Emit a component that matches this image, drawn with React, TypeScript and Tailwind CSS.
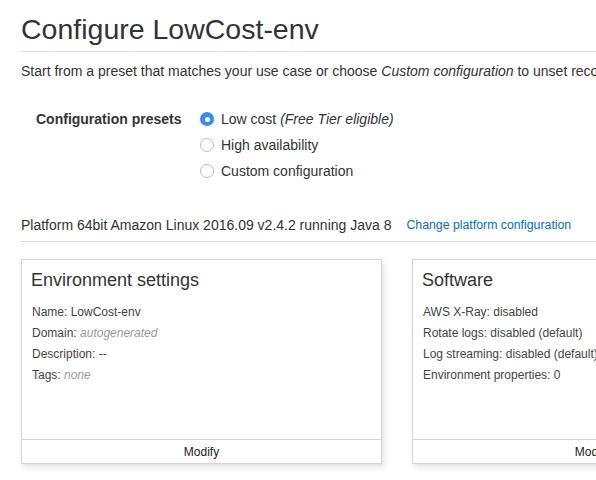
import React from 'react'

const font = { fontFamily: '"Liberation Sans", Arial, sans-serif' }

function Radio({ checked, children }: { checked?: boolean; children: React.ReactNode }) {
  return (
    <label className="flex h-[26px] items-center gap-[7px]">
      {checked ? (
        <span className="flex h-[14px] w-[14px] items-center justify-center rounded-full bg-[#3b8cf0]">
          <span className="h-[5px] w-[5px] rounded-full bg-white" />
        </span>
      ) : (
        <span className="h-[14px] w-[14px] rounded-full border border-[#bdbdbd] bg-white" />
      )}
      <span className="text-[14px] text-[#333]">{children}</span>
    </label>
  )
}

function Card({ title, children }: { title: string; children: React.ReactNode }) {
  return (
    <div className="flex h-[205px] w-[361px] shrink-0 flex-col border border-[#d5d5d5] bg-white shadow-[2px_3px_6px_rgba(0,0,0,0.12)]">
      <div className="flex-1 px-[9px] pt-[9px]">
        <h3 className="text-[18px] leading-[22px] text-[#333]">{title}</h3>
        <ul className="mt-[13px] space-y-[5px] pl-px text-[12px] leading-4 text-[#444]">{children}</ul>
      </div>
      <div className="flex h-[24px] items-center justify-center border-t border-[#d5d5d5] text-[12px] text-[#222]">
        Modify
      </div>
    </div>
  )
}

export default function App() {
  return (
    <div className="h-[480px] w-[596px] overflow-hidden bg-white" style={font}>
      <div className="pl-[21px]">
        <h1 className="pt-[12px] text-[28.5px] leading-[34px] text-[#333]">Configure LowCost-env</h1>
        <div className="mt-[5px] border-t border-[#dcdcdc]" />
        <p className="mt-[10px] whitespace-nowrap text-[14px] leading-[18px] text-[#333]">
          Start from a preset that matches your use case or choose <i>Custom configuration</i> to unset recommended values
        </p>

        <div className="mt-[26px] flex pl-[15px]">
          <div className="w-[164px] pt-[3px] text-[14px] font-bold text-[#333]">Configuration presets</div>
          <div className="flex flex-col">
            <Radio checked>
              Low cost <i>(Free Tier eligible)</i>
            </Radio>
            <Radio>High availability</Radio>
            <Radio>Custom configuration</Radio>
          </div>
        </div>

        <div className="mt-[31px] flex items-center whitespace-nowrap">
          <span className="text-[14px] text-[#333]">Platform 64bit Amazon Linux 2016.09 v2.4.2 running Java 8</span>
          <a href="#" className="ml-[15px] text-[12.3px] text-[#0a6ebd]">
            Change platform configuration
          </a>
        </div>
        <div className="mt-[5px] border-t border-[#dcdcdc]" />

        <div className="mt-[17px] flex gap-[30px]">
          <Card title="Environment settings">
            <li>Name: LowCost-env</li>
            <li>
              Domain: <i className="text-[#999]">autogenerated</i>
            </li>
            <li>Description: --</li>
            <li>
              Tags: <i className="text-[#999]">none</i>
            </li>
          </Card>
          <Card title="Software">
            <li>AWS X-Ray: disabled</li>
            <li>Rotate logs: disabled (default)</li>
            <li>Log streaming: disabled (default)</li>
            <li>Environment properties: 0</li>
          </Card>
        </div>
      </div>
    </div>
  )
}
